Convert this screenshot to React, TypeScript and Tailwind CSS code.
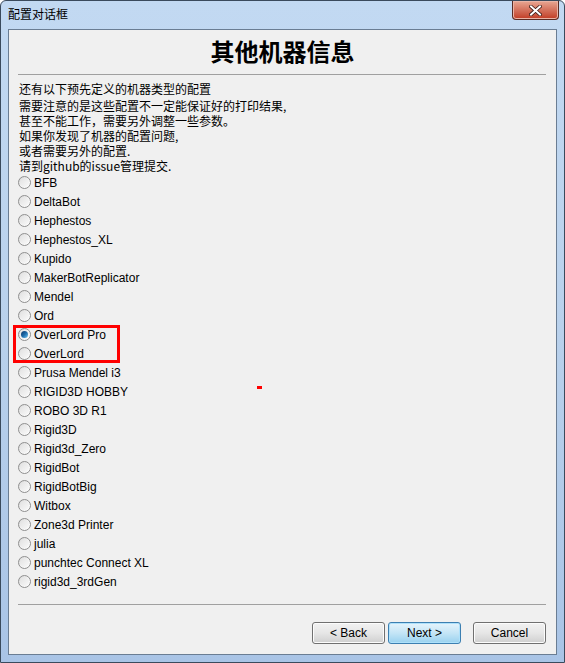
import React from "react"

const machines = [
  "BFB",
  "DeltaBot",
  "Hephestos",
  "Hephestos_XL",
  "Kupido",
  "MakerBotReplicator",
  "Mendel",
  "Ord",
  "OverLord Pro",
  "OverLord",
  "Prusa Mendel i3",
  "RIGID3D HOBBY",
  "ROBO 3D R1",
  "Rigid3D",
  "Rigid3d_Zero",
  "RigidBot",
  "RigidBotBig",
  "Witbox",
  "Zone3d Printer",
  "julia",
  "punchtec Connect XL",
  "rigid3d_3rdGen",
]

const notes = [
  "需要注意的是这些配置不一定能保证好的打印结果,",
  "甚至不能工作，需要另外调整一些参数。",
  "如果你发现了机器的配置问题,",
  "或者需要另外的配置.",
  "请到github的issue管理提交.",
]

function Radio({ checked }: { checked?: boolean }) {
  return (
    <span className="flex h-[13px] w-[13px] shrink-0 items-center justify-center rounded-full border border-[#8f8f8f] bg-gradient-to-br from-[#d4d4d4] via-[#f4f4f4] to-[#ffffff]">
      <span className="flex h-[9px] w-[9px] items-center justify-center rounded-full bg-gradient-to-br from-[#e2e2e2] to-[#f9f9f9]">
        {checked && <span className="h-[7px] w-[7px] rounded-full bg-gradient-to-br from-[#0b3566] via-[#1d6cab] to-[#6cc6f2]" />}
      </span>
    </span>
  )
}

function Button({ label, primary }: { label: string; primary?: boolean }) {
  return (
    <button
      className={`flex h-[22px] w-[73px] items-center justify-center rounded-[3px] border text-[12px] text-black ${
        primary
          ? "border-[#3c7fb1] bg-gradient-to-b from-[#e5f4fc] via-[#c4e5f6] to-[#98d1ef] shadow-[inset_0_0_0_1px_#aee1fb]"
          : "border-[#707070] bg-gradient-to-b from-[#f2f2f2] via-[#e6e6e6] to-[#cfcfcf] shadow-[inset_0_0_0_1px_#fcfcfc]"
      }`}
    >
      {label}
    </button>
  )
}

export default function App() {
  return (
    <div
      className="relative flex h-[663px] w-[565px] flex-col overflow-hidden rounded-t-[6px] border border-[#3a4a5c] bg-gradient-to-b from-[#c2d9f2] via-[#b9d1ec] to-[#a9c4e6] text-black"
      style={{ fontFamily: '"Liberation Sans", "Noto Sans CJK SC", sans-serif' }}
    >
      {/* title bar */}
      <div className="flex h-[28px] shrink-0 items-start justify-between">
        <span className="pl-[7px] pt-[5px] text-[12px] leading-[15px]" style={{ fontFamily: '"Noto Sans CJK SC", sans-serif' }}>
          配置对话框
        </span>
        <div className="mr-[5px] flex h-[19px] w-[47px] items-center justify-center rounded-b-[4px] border border-t-0 border-[#5a2c24] bg-gradient-to-b from-[#e8a793] via-[#d4715c] to-[#c13a22] shadow-[inset_0_0_0_1px_#eab4a6]">
          <svg width="13" height="11" viewBox="0 0 13 11">
            <path d="M2 1.5 L11 9.5 M11 1.5 L2 9.5" stroke="#3b1a14" strokeWidth="3.6" strokeLinecap="square" />
            <path d="M2 1.5 L11 9.5 M11 1.5 L2 9.5" stroke="#ffffff" strokeWidth="2" strokeLinecap="square" />
          </svg>
        </div>
      </div>

      {/* client area */}
      <div className="mx-[7px] flex h-[626px] flex-col border border-[#6a7d93] bg-[#f0f0f0]">
        <div className="flex h-[44px] shrink-0 items-center justify-center pb-[2px]">
          <h1 className="text-[24px] font-bold leading-none" style={{ fontFamily: '"Noto Sans CJK SC", sans-serif' }}>
            其他机器信息
          </h1>
        </div>
        <div className="ml-[9px] mr-[10px] h-px bg-[#a0a0a0]" />

        <div className="ml-[10px] mt-[6px] text-[12px]" style={{ fontFamily: '"Noto Sans CJK SC", sans-serif' }}>
          <p className="h-[15px] leading-[15px]">还有以下预先定义的机器类型的配置</p>
          <div className="mt-[2px] flex flex-col">
            {notes.map((n) => (
              <p key={n} className="h-[15px] overflow-visible whitespace-nowrap leading-[15px]">
                {n}
              </p>
            ))}
          </div>
        </div>

        <div className="ml-[9px] flex flex-col">
          {machines.map((m) => (
            <label key={m} className="flex h-[19px] items-center gap-[3px] text-[12px]">
              <Radio checked={m === "OverLord Pro"} />
              <span>{m}</span>
            </label>
          ))}
        </div>

        <div className="ml-[9px] mr-[10px] mt-[13px] h-px bg-[#a0a0a0]" />

        <div className="mr-[10px] mt-[17px] flex justify-end">
          <div className="flex gap-[3px]">
            <Button label="< Back" />
            <Button label="Next >" primary />
          </div>
          <div className="ml-[12px]">
            <Button label="Cancel" />
          </div>
        </div>
      </div>

      {/* annotation overlays */}
      <div className="pointer-events-none absolute left-[12px] top-[324px] h-[38px] w-[107px] border-[3px] border-[#ff0000]" />
      <div className="pointer-events-none absolute left-[256px] top-[385px] h-[3px] w-[5px] bg-[#ff0000]" />
    </div>
  )
}
